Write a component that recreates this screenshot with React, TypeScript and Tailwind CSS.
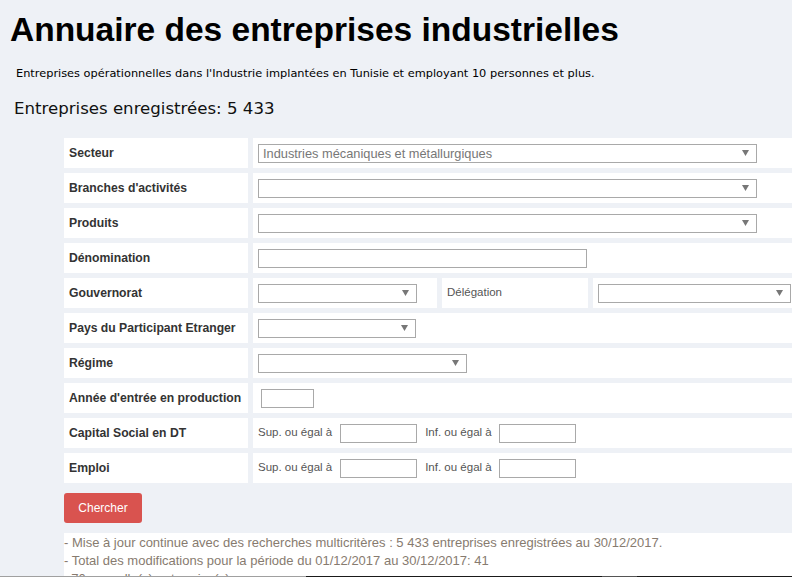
import React from "react";

function Arrow() {
  return (
    <svg width="7" height="6" viewBox="0 0 7 6" className="shrink-0">
      <polygon points="0,0 7,0 3.5,6" fill="#777" />
    </svg>
  );
}

function Select({ w, value }: { w: string; value?: string }) {
  return (
    <div
      className={`${w} h-[19px] border border-[#a9a9a9] bg-white flex items-center justify-between pl-[4px] pr-[7px] text-[12.8px] text-[#777] leading-[17px] font-['Liberation_Sans',Arial,sans-serif]`}
    >
      <span className="whitespace-nowrap">{value ?? ""}</span>
      <Arrow />
    </div>
  );
}

function Input({ w }: { w: string }) {
  return <div className={`${w} h-[19px] border border-[#a9a9a9] bg-white`} />;
}

function Label({ children }: { children: React.ReactNode }) {
  return (
    <div className="bg-white flex items-center pl-[5px] text-[12.2px] font-bold text-[#333]">
      {children}
    </div>
  );
}

function Range() {
  return (
    <div className="col-span-3 bg-white flex items-center pl-[5px] text-[11.5px] text-[#555]">
      <span>Sup. ou égal à</span>
      <div className="ml-[8px]">
        <Input w="w-[77px]" />
      </div>
      <span className="ml-[8px]">Inf. ou égal à</span>
      <div className="ml-[7px]">
        <Input w="w-[77px]" />
      </div>
    </div>
  );
}

export default function App() {
  return (
    <div className="relative w-[792px] h-[577px] overflow-hidden bg-[#eef1f6] font-['Liberation_Sans',Arial,sans-serif] text-black">
      <h1 className="pl-[10px] pt-[10px] text-[33.5px] font-bold leading-[40px] text-black">
        Annuaire des entreprises industrielles
      </h1>
      <p className="mt-[15px] pl-[16px] text-[11.35px] leading-[16px] text-black font-['DejaVu_Sans',Verdana,sans-serif]">
        Entreprises opérationnelles dans l'Industrie implantées en Tunisie et employant 10 personnes et plus.
      </p>
      <p className="mt-[16px] pl-[14px] text-[16.6px] leading-[24px] text-[#111] font-['DejaVu_Sans',Verdana,sans-serif]">
        Entreprises enregistrées: 5 433
      </p>

      <div className="mt-[17px] ml-[64px] grid grid-cols-[184px_184px_146px_1fr] auto-rows-[30px] gap-[5px]">
        <Label>Secteur</Label>
        <div className="col-span-3 bg-white flex items-center pl-[5px]">
          <Select w="w-[499px]" value="Industries mécaniques et métallurgiques" />
        </div>

        <Label>Branches d'activités</Label>
        <div className="col-span-3 bg-white flex items-center pl-[5px]">
          <Select w="w-[499px]" />
        </div>

        <Label>Produits</Label>
        <div className="col-span-3 bg-white flex items-center pl-[5px]">
          <Select w="w-[499px]" />
        </div>

        <Label>Dénomination</Label>
        <div className="col-span-3 bg-white flex items-center pl-[5px]">
          <Input w="w-[329px]" />
        </div>

        <Label>Gouvernorat</Label>
        <div className="bg-white flex items-center pl-[5px]">
          <Select w="w-[159px]" />
        </div>
        <div className="bg-white flex items-center pl-[5px] text-[11.5px] text-[#555]">
          Délégation
        </div>
        <div className="bg-white flex items-center pl-[5px]">
          <Select w="w-[193px]" />
        </div>

        <Label>Pays du Participant Etranger</Label>
        <div className="col-span-3 bg-white flex items-center pl-[5px]">
          <Select w="w-[158px]" />
        </div>

        <Label>Régime</Label>
        <div className="col-span-3 bg-white flex items-center pl-[5px]">
          <Select w="w-[209px]" />
        </div>

        <Label>Année d'entrée en production</Label>
        <div className="col-span-3 bg-white flex items-center pl-[8px]">
          <Input w="w-[53px]" />
        </div>

        <Label>Capital Social en DT</Label>
        <Range />

        <Label>Emploi</Label>
        <Range />
      </div>

      <button className="mt-[10px] ml-[64px] block w-[78px] h-[30px] rounded-[3px] bg-[#d9534f] text-white text-[12px] font-['Liberation_Sans',Arial,sans-serif]">
        Chercher
      </button>

      <div className="mt-[10px] ml-[64px] bg-white pt-[1px] text-[13px] leading-[18px] text-[#877b6f] h-[60px]">
        <div>- Mise à jour continue avec des recherches multicritères : 5 433 entreprises enregistrées au 30/12/2017.</div>
        <div>- Total des modifications pour la période du 01/12/2017 au 30/12/2017: 41</div>
        <div>&nbsp;&nbsp;70 nouvelle(s) entreprise(s)</div>
      </div>

      <div className="absolute left-0 bottom-0 w-full h-px flex">
        <div className="w-[306px] bg-[#a0a0a0]" />
        <div className="w-[296px] bg-[#1a1a1a]" />
        <div className="w-[35px] bg-[#555]" />
        <div className="flex-1 bg-[#1a1a1a]" />
      </div>
    </div>
  );
}
